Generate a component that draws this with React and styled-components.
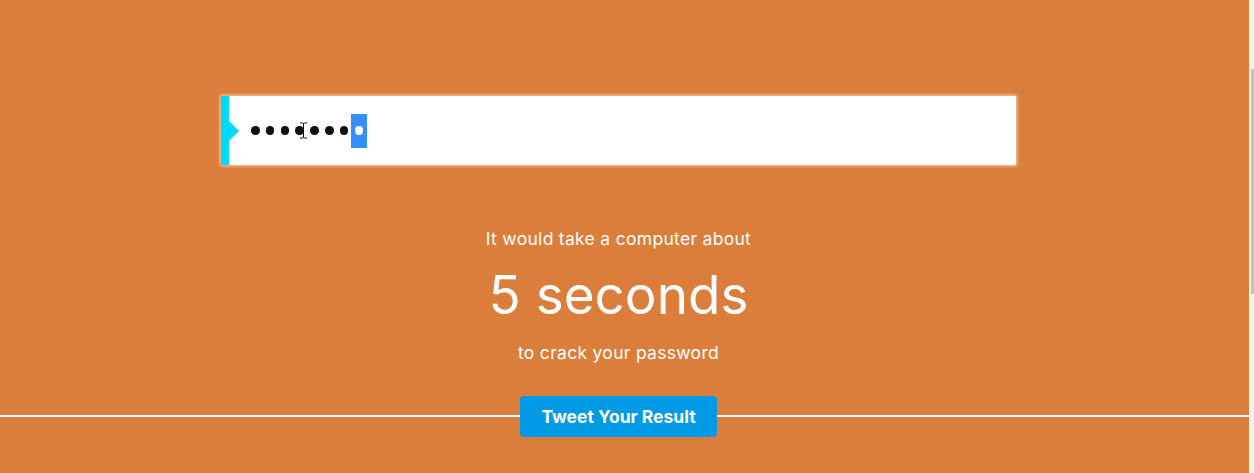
import styled, { createGlobalStyle } from 'styled-components';

const orange = '#db7e3b';

const GlobalStyle = createGlobalStyle`
	html, body {
		margin: 0;
		padding: 0;
		overflow: hidden;
	}
	body {
		font-family: 'Inter', 'Liberation Sans', sans-serif;
	}
`;

const App = () => {
	const hidden = 7;
	return (
		<Shell>
			<GlobalStyle />
			<Page>
				<Field>
					<Marker />
					<Masked>
						{Array.from({ length: hidden }).map((_, i) => (
							<Dot key={i} />
						))}
						<Selected>
							<Dot $light />
						</Selected>
						<Caret viewBox='0 0 9 17' aria-hidden='true'>
							<path
								d='M1 1h2.5q1 0 1 1v13q0 1 1 1H8M8 1H5.5q-1 0-1 1M4.5 15q0 1-1 1H1'
								fill='none'
								stroke='#111'
								strokeWidth='1'
							/>
						</Caret>
					</Masked>
				</Field>

				<Result>
					<Lead>It would take a computer about</Lead>
					<Time>5 seconds</Time>
					<Lead>to crack your password</Lead>
				</Result>

				<ShareRow>
					<Rule />
					<TweetButton type='button'>Tweet Your Result</TweetButton>
					<Rule $right />
				</ShareRow>
			</Page>
			<Scrollbar>
				<Thumb />
			</Scrollbar>
		</Shell>
	);
};

const Shell = styled.div`
	display: flex;
	width: 100vw;
	height: 100vh;
	overflow: hidden;
`;

const Page = styled.main`
	flex: 1;
	background: ${orange};
	display: flex;
	flex-direction: column;
	align-items: center;
	padding: 96px 12px 0 0;
	box-sizing: border-box;
`;

const Field = styled.div`
	width: 795px;
	height: 69px;
	flex-shrink: 0;
	background: #fff;
	display: flex;
	align-items: center;
	box-shadow: 0 0 3px 1px rgba(255, 235, 220, 0.75);
`;

const Marker = styled.div`
	position: relative;
	width: 8px;
	height: 100%;
	background: #00d9ff;

	/* the little arrow pointing into the field */
	&::after {
		content: '';
		position: absolute;
		left: 8px;
		top: 50%;
		transform: translateY(-50%);
		border-top: 10px solid transparent;
		border-bottom: 10px solid transparent;
		border-left: 10px solid #00d9ff;
	}
`;

const Masked = styled.div`
	position: relative;
	display: flex;
	align-items: center;
	margin-left: 19px;
	height: 34px;
`;

const Dot = styled.span`
	width: 8.5px;
	height: 8.5px;
	border-radius: 50%;
	background: ${(p) => (p.$light ? '#fff' : '#111')};
	margin: 0 3.15px;
`;

const Selected = styled.span`
	display: flex;
	align-items: center;
	height: 34px;
	background: #338fff;
	padding: 0 0.2px;
`;

const Caret = styled.svg`
	position: absolute;
	left: 51px;
	top: 8px;
	width: 9px;
	height: 17px;
`;

const Result = styled.section`
	margin-top: 63px;
	display: flex;
	flex-direction: column;
	align-items: center;
	color: #fff;
`;

const Lead = styled.p`
	margin: 0;
	font-size: 17.5px;
	line-height: 22px;
	letter-spacing: 0.3px;
`;

const Time = styled.h1`
	margin: 13px 0 15px;
	font-size: 53px;
	line-height: 64px;
	font-weight: 400;
`;

const ShareRow = styled.div`
	margin-top: 32px;
	width: 100%;
	display: grid;
	grid-template-columns: 1fr auto 1fr;
	align-items: center;
`;

const Rule = styled.div`
	height: 2px;
	background: #fff;
	margin-top: -1px;
	margin-right: ${(p) => (p.$right ? '-12px' : '0')};
`;

const TweetButton = styled.button`
	width: 197px;
	height: 41px;
	border: none;
	border-radius: 4px;
	background: #009be4;
	color: #fff;
	font-family: 'Inter', 'Liberation Sans', sans-serif;
	font-weight: 700;
	font-size: 17.5px;
	cursor: pointer;
`;

const Scrollbar = styled.div`
	width: 5px;
	background: #f1f1f1;
	padding-top: 69px;
	box-sizing: border-box;
	display: flex;
	justify-content: flex-end;
`;

const Thumb = styled.div`
	width: 3px;
	height: 225px;
	background: #c1c1c1;
`;

export default App;
